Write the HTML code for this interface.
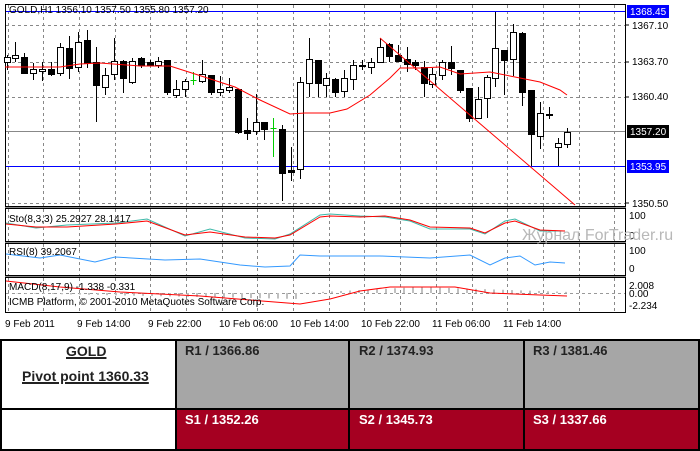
<!DOCTYPE html>
<html><head><meta charset="utf-8"><style>
html,body{margin:0;padding:0;background:#fff;width:700px;height:451px;overflow:hidden;font-family:"Liberation Sans",sans-serif}
svg{position:absolute;left:0;top:0}
.t{position:absolute;font-family:"Liberation Sans",Arial,sans-serif;font-weight:bold;font-size:13px}
</style></head><body>
<svg id="c" width="700" height="336" viewBox="0 0 700 336" font-family="Liberation Sans, sans-serif" font-size="10">
<rect x="0" y="0" width="700" height="336" fill="#fff"/>
<g id="grid" stroke="#888" stroke-dasharray="3,3" stroke-width="1"></g>
<rect x="5.5" y="4.5" width="620" height="202" fill="none" stroke="#000"/>
<rect x="5.5" y="208.5" width="620" height="33" fill="none" stroke="#000"/>
<rect x="5.5" y="243.5" width="620" height="32" fill="none" stroke="#000"/>
<rect x="5.5" y="277.5" width="620" height="35" fill="none" stroke="#000"/>
<line x1="5" y1="207.5" x2="626" y2="207.5" stroke="#888"/>
<line x1="5" y1="242.5" x2="626" y2="242.5" stroke="#888"/>
<line x1="5" y1="276.5" x2="626" y2="276.5" stroke="#888"/>
<line x1="6" y1="11.5" x2="625" y2="11.5" stroke="#0000ff"/>
<line x1="6" y1="166.5" x2="625" y2="166.5" stroke="#0000ff"/>
<line x1="6" y1="131.5" x2="625" y2="131.5" stroke="#888"/>
<g id="cd"></g>
<polyline fill="none" stroke="#f00" points="5,67 30,67 60,67 80,64 100,63 140,66 170,66 195,74 235,87 260,100 290,114 305,113 330,113 347,109 370,95 390,78 400,68 420,68 440,67 460,74 490,72 520,78 540,82 560,90 567,95"/>
<line x1="380" y1="38" x2="575" y2="205" stroke="#f00"/>
<text x="9" y="13" fill="#000">GOLD,H1  1356.10 1357.50 1355.80 1357.20</text>
<g fill="#000">
<rect x="627" y="5" width="42" height="13" fill="#0000ff"/><text x="630" y="15" fill="#fff">1368.45</text>
<text x="632" y="29">1367.10</text>
<text x="632" y="65">1363.70</text>
<text x="632" y="100">1360.40</text>
<rect x="627" y="125" width="42" height="13" fill="#000"/><text x="630" y="135" fill="#fff">1357.20</text>
<rect x="627" y="160" width="42" height="13" fill="#0000ff"/><text x="630" y="170" fill="#fff">1353.95</text>
<text x="632" y="207">1350.50</text>
<text x="629" y="219">100</text><text x="629" y="239" >0</text>
<text x="629" y="254">100</text><text x="629" y="272">0</text>
<text x="629" y="289">2.008</text><text x="629" y="297">0.00</text><text x="629" y="309">-2.234</text>
</g>
<g stroke="#000"><line x1="626" y1="25" x2="629" y2="25"/><line x1="626" y1="62" x2="629" y2="62"/><line x1="626" y1="97" x2="629" y2="97"/><line x1="626" y1="203" x2="629" y2="203"/></g>
<polyline fill="none" stroke="#3cb8a8" points="6,223 36,228 67,225 116,223 147,219 185,236 210,229 245,238 275,239 290,234 320,215 330,214 360,216 385,217 410,221 430,229 470,229 485,234 505,221 515,219 540,231 565,231"/>
<polyline fill="none" stroke="#f00" points="6,224 36,227 67,227 116,224 147,221 185,235 210,232 245,237 275,238 290,235 320,217 330,216 360,217 385,216 410,220 430,227 470,228 485,233 505,223 515,221 540,230 565,231"/>
<text x="9" y="222" fill="#000">Sto(8,3,3) 25.2927 28.1417</text>
<text x="522" y="240" fill="#b8b8b8" font-size="16">Журнал ForTrader.ru</text>
<polyline fill="none" stroke="#3399ff" points="6,254 40,258 60,255 95,262 115,257 165,260 200,259 240,265 265,267 290,266 300,255 320,256 380,256 430,258 470,255 490,265 505,258 520,256 535,265 550,262 565,263"/>
<text x="9" y="255" fill="#000">RSI(8) 39.2067</text>
<line x1="6" y1="293.5" x2="625" y2="293.5" stroke="#999" stroke-dasharray="3,3"/>
<g id="hist" stroke="#c0c0c0" stroke-width="2"></g>
<polyline fill="none" stroke="#f00" points="6,281 60,287 120,292 200,296 250,300 300,304 330,299 360,291 390,287 455,287 490,293 540,295 567,296"/>
<text x="9" y="290" fill="#000">MACD(8,17,9) -1.338 -0.331</text>
<text x="9" y="305" fill="#000">ICMB Platform, © 2001-2010 MetaQuotes Software Corp.</text>
<g fill="#000">
<text x="5" y="327">9 Feb 2011</text><text x="77" y="327">9 Feb 14:00</text><text x="148" y="327">9 Feb 22:00</text><text x="219" y="327">10 Feb 06:00</text><text x="290" y="327">10 Feb 14:00</text><text x="361" y="327">10 Feb 22:00</text><text x="432" y="327">11 Feb 06:00</text><text x="503" y="327">11 Feb 14:00</text>
</g>
</svg>
<div style="position:absolute;left:0;top:339px;width:700px;height:112px;border:2px solid #000;box-sizing:border-box"></div>
<div style="position:absolute;left:177px;top:341px;width:521px;height:67px;background:#a6a6a6"></div>
<div style="position:absolute;left:177px;top:410px;width:521px;height:39px;background:#a50021"></div>
<div style="position:absolute;left:175px;top:339px;width:2px;height:112px;background:#000"></div>
<div style="position:absolute;left:348px;top:339px;width:2px;height:112px;background:#000"></div>
<div style="position:absolute;left:523px;top:339px;width:2px;height:112px;background:#000"></div>
<div style="position:absolute;left:0;top:408px;width:700px;height:2px;background:#000"></div>
<div class="t" style="left:66px;top:343px;font-size:14px;text-decoration:underline;text-decoration-thickness:2px;color:#222">GOLD</div>
<div class="t" style="left:22px;top:368px;font-size:14px;text-decoration:underline;text-decoration-thickness:2px;color:#222">Pivot point 1360.33</div>
<div class="t" style="left:185px;top:343px;color:#222">R1 / 1366.86</div>
<div class="t" style="left:359px;top:343px;color:#222">R2 / 1374.93</div>
<div class="t" style="left:533px;top:343px;color:#222">R3 / 1381.46</div>
<div class="t" style="left:185px;top:412px;color:#fff">S1 / 1352.26</div>
<div class="t" style="left:359px;top:412px;color:#fff">S2 / 1345.73</div>
<div class="t" style="left:533px;top:412px;color:#fff">S3 / 1337.66</div>
<script>
var ns="http://www.w3.org/2000/svg";
function el(p,t,a){var e=document.createElementNS(ns,t);for(var k in a)e.setAttribute(k,a[k]);p.appendChild(e);return e;}
var g=document.getElementById("grid");
for(var x=7.5;x<625;x+=35.7){var xx=Math.round(x)+.5;el(g,"line",{x1:xx,y1:5,x2:xx,y2:206});el(g,"line",{x1:xx,y1:209,x2:xx,y2:241});el(g,"line",{x1:xx,y1:244,x2:xx,y2:275});el(g,"line",{x1:xx,y1:278,x2:xx,y2:312});}
[25.5,62.5,97.5,203.5].forEach(function(y){el(g,"line",{x1:6,y1:y,x2:625,y2:y});});
var C=[[7,'w',57,62,55,70],[15,'w',55,58,42,62],[24,'b',57,73,53,73],[33,'w',69,73,63,80],[42,'w',69,71,62,81],[51,'b',69,74,62,76],[60,'w',47,73,43,76],[69,'b',48,68,36,79],[78,'w',42,67,32,72],[87,'b',40,63,30,68],[96,'b',62,85,47,122],[105,'w',75,87,68,95],[114,'w',61,74,38,80],[123,'b',61,78,60,93],[132,'w',61,82,58,84],[141,'b',58,65,57,68],[150,'b',62,65,60,66],[158,'w',61,65,57,68],[167,'b',60,92,60,95],[176,'w',89,95,80,98],[185,'w',81,89,79,97],[193,'g',80,80,72,85],[202,'w',74,81,60,83],[211,'b',75,92,75,95],[220,'w',89,92,76,96],[229,'w',87,90,78,93],[238,'b',89,132,89,134],[247,'b',130,133,118,140],[256,'w',122,131,94,135],[264,'b',122,129,122,140],[273,'g',128,128,118,157],[282,'b',129,173,125,201],[291,'b',170,172,147,181],[300,'w',82,169,77,179],[309,'w',59,83,38,97],[318,'b',60,83,60,97],[326,'w',78,85,73,97],[335,'b',79,92,78,97],[344,'w',78,91,70,97],[353,'w',65,79,60,90],[362,'b',65,66,60,70],[371,'w',62,67,58,74],[380,'w',47,62,38,63],[389,'b',44,56,43,62],[398,'b',55,61,45,62],[407,'b',59,64,47,72],[415,'b',62,65,60,70],[424,'b',67,83,61,97],[432,'w',74,84,68,88],[442,'w',62,75,60,80],[451,'b',62,68,46,75],[460,'b',70,90,70,93],[469,'b',88,118,88,122],[478,'w',99,118,87,119],[487,'w',77,98,75,118],[495,'w',48,78,12,87],[504,'b',50,60,50,95],[513,'w',32,59,24,76],[522,'b',33,92,32,106],[531,'b',90,134,90,166],[540,'w',113,136,102,149],[549,'b',114,115,107,119],[558,'w',143,147,138,166],[567,'w',132,144,128,148]];
var cd=document.getElementById("cd");
C.forEach(function(c){var x=c[0]+.5,col=c[1]=='g'?'#0c0':'#000';
el(cd,"line",{x1:x,y1:c[4],x2:x,y2:c[5],stroke:col});
if(c[1]=='g'){el(cd,"line",{x1:x-3,y1:c[2]+.5,x2:x+3,y2:c[2]+.5,stroke:col});}
else el(cd,"rect",{x:x-3,y:c[2]+.5,width:6,height:Math.max(1,c[3]-c[2]),fill:c[1]=='b'?'#000':'#fff',stroke:'#000'});});
var h=document.getElementById("hist");
for(var x=8;x<568;x+=9){var y=293+(x<300?Math.min(6,(x/300)*6):(x<420?-(x-300)/20:-6+((x-420)/30)));el(h,"line",{x1:x,y1:293,x2:x,y2:y});}
</script>
</body></html>
